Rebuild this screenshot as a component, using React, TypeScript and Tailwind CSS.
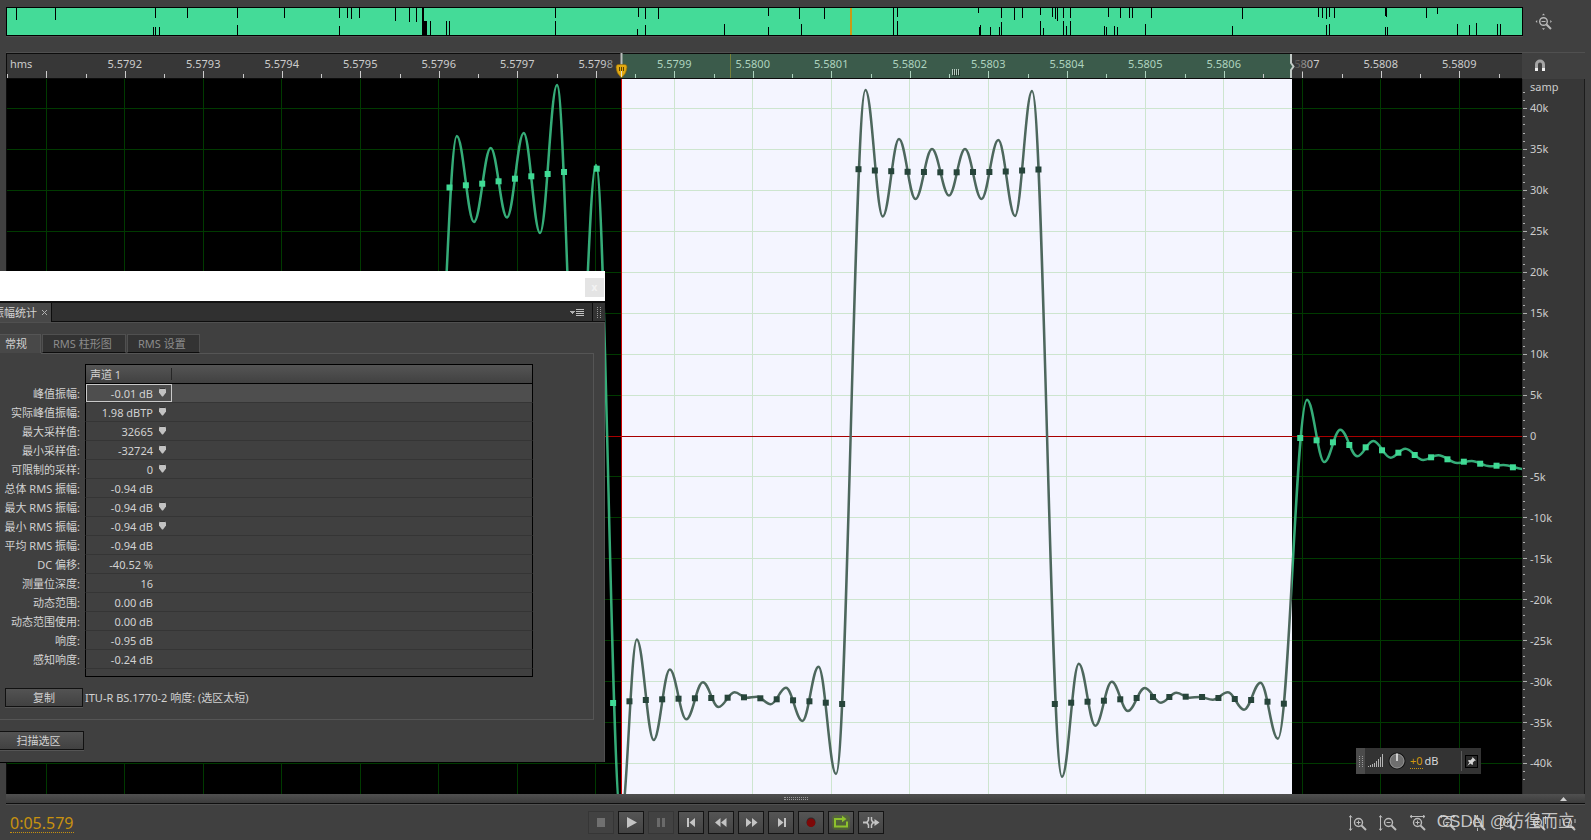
import React from "react";

// [x, length] of the silent gaps in the overview bar
const TOP_GAPS = [
    [9, 12], [48, 12], [148, 10], [180, 10], [230, 10], [277, 10], [332, 10], [340, 10], [344, 11], [352, 10], [388, 13], [402, 14], [409, 14], [415, 14], [416, 14],
    [548, 10], [631, 9], [638, 11], [651, 11], [761, 8], [792, 11], [817, 11], [886, 14], [890, 9], [971, 5], [994, 10], [1007, 12], [1015, 10], [1033, 7], [1045, 9], [1048, 11], [1050, 13],
    [1056, 10], [1063, 10], [1101, 9], [1113, 10], [1122, 10], [1125, 10], [1144, 10], [1235, 11], [1311, 9], [1315, 10], [1319, 11], [1322, 9], [1327, 10], [1378, 8], [1379, 9], [1419, 10], [1430, 6],
];
const BOTTOM_GAPS = [
    [146, 8], [148, 8], [152, 8], [230, 10], [332, 9], [415, 14], [416, 14], [417, 14], [418, 14], [419, 14], [423, 14], [439, 14], [442, 14],
    [548, 14], [630, 6], [638, 10], [717, 11], [761, 8], [794, 11], [886, 13], [890, 14], [972, 8], [973, 10], [983, 8], [992, 8], [994, 13], [1033, 14], [1036, 7],
    [1056, 14], [1059, 9], [1063, 14], [1097, 9], [1099, 8], [1107, 9], [1110, 8], [1138, 11], [1225, 9], [1319, 10], [1322, 11], [1378, 8], [1380, 8], [1450, 11], [1462, 10], [1469, 12], [1490, 11], [1493, 11],
];

// Turning points of the interpolated wave
const TURNS = [
    [436, 420], [456.8, 136], [474, 222], [490.7, 148], [507, 217.5], [523.7, 133], [540, 233], [557, 85], [577, 440], [596, 165], [621, 818],
    [636.8, 639.5], [653.7, 740], [669.8, 669.5], [686.3, 719.3], [702.9, 682.3], [718.5, 707], [734.6, 692.3], [746.5, 697.7], [757, 696.7],
    [770.7, 704.3], [785.9, 687.7], [802.4, 721], [818.5, 666.7], [836, 774], [865.5, 90], [882.8, 216.5], [899, 139], [915.5, 199],
    [932, 149], [949, 195.5], [965, 149], [981.5, 199], [998.3, 140], [1015, 216], [1032, 91], [1062, 776.7], [1078.8, 663.7],
    [1095.3, 725.7], [1111.8, 681.7], [1127.9, 711], [1144.8, 688], [1160.9, 702.7], [1176.5, 692.7], [1189.5, 697.7], [1200, 697],
    [1212.7, 699.7], [1227.9, 692.3], [1244, 709.7], [1260.5, 682.7], [1277.9, 738.7], [1307, 399.7], [1324.3, 462], [1340.3, 429.7],
    [1357.3, 456.3], [1373.3, 441], [1390.7, 457.7], [1405.3, 448.7], [1423.3, 460], [1438.3, 455.3], [1457.3, 463], [1471.7, 461],
    [1490, 466.3], [1503.3, 465], [1524, 469],
];

// One sample every 16.36 units, null where the panel hides it
const SAMPLES = [
    187.5, 185.3, 183.7, 181.3, 178.7, 176.3, 174, 172, null, 168.7, 703,
    701.3, 700, 699.3, 698.7, 698.3, 698, 697.7, 697.3, 698.3, 699.3, 700.3, 701.3, 702.7, 704,
    169.2, 170.5, 171.2, 171.8, 172, 172.3, 172.3, 172, 172, 171.5, 170.5, 169.5,
    704, 702.7, 701.7, 700.7, 699.3, 698, 697, 697, 696.7, 697, 698, 699, 700, 701.7, 703.7,
    438, 440.3, 442.3, 445, 447.3, 450.3, 452.7, 455, 457.3, 459.3, 461.7, 463.7, 465.7, 467.3,
];

const TIMES = ["", "5.5792", "5.5793", "5.5794", "5.5795", "5.5796", "5.5797", "5.5798", "5.5799", "5.5800", "5.5801", "5.5802", "5.5803", "5.5804", "5.5805", "5.5806", "5.5807", "5.5808", "5.5809"];
const LEVELS = ["40k", "35k", "30k", "25k", "20k", "15k", "10k", "5k", "0", "-5k", "-10k", "-15k", "-20k", "-25k", "-30k", "-35k", "-40k"];

const STATS: { label: string; value: string; pin?: boolean }[] = [
    { label: "峰值振幅:", value: "-0.01 dB", pin: true },
    { label: "实际峰值振幅:", value: "1.98 dBTP", pin: true },
    { label: "最大采样值:", value: "32665", pin: true },
    { label: "最小采样值:", value: "-32724", pin: true },
    { label: "可限制的采样:", value: "0", pin: true },
    { label: "总体 RMS 振幅:", value: "-0.94 dB" },
    { label: "最大 RMS 振幅:", value: "-0.94 dB", pin: true },
    { label: "最小 RMS 振幅:", value: "-0.94 dB", pin: true },
    { label: "平均 RMS 振幅:", value: "-0.94 dB" },
    { label: "DC 偏移:", value: "-40.52 %" },
    { label: "测量位深度:", value: "16" },
    { label: "动态范围:", value: "0.00 dB" },
    { label: "动态范围使用:", value: "0.00 dB" },
    { label: "响度:", value: "-0.95 dB" },
    { label: "感知响度:", value: "-0.24 dB" },
];

function smoothPath(points: number[][]) {
    let d = `M${points[0][0]} ${points[0][1]}`;
    for (let i = 1; i < points.length; i++) {
        const [x0, y0] = points[i - 1];
        const [x1, y1] = points[i];
        const k = (x1 - x0) * 0.37;
        d += `C${x0 + k} ${y0} ${x1 - k} ${y1} ${x1} ${y1}`;
    }
    return d;
}

const WAVE = smoothPath(TURNS);

function Overview() {
    return (
        <div className="flex pl-[6px] pt-[7px]">
            <div className="h-[29px] flex-1 border border-black bg-[#44db98] shadow-[0_1px_0_#505050]">
                <svg className="block h-full w-full" viewBox="0 0 1515 27" preserveAspectRatio="none" shapeRendering="crispEdges">
                    {TOP_GAPS.map(([x, len]) => <rect key={x} x={x} y={0} width={1} height={len} fill="#000" />)}
                    {BOTTOM_GAPS.map(([x, len]) => <rect key={x} x={x} y={27 - len} width={1} height={len} fill="#000" />)}
                    <rect x={843} y={0} width={2} height={27} fill="#c99a16" />
                </svg>
            </div>
            <div className="flex w-[68px] items-center pl-[12px]">
                <button aria-label="Zoom out full">
                    <svg width="18" height="18" viewBox="0 0 18 18" fill="none" stroke="#b8b8b8">
                        <circle cx="8.5" cy="8.5" r="3.8" strokeWidth="1.4" />
                        <path d="M11.5 11.5L16 16" strokeWidth="2" />
                        <path d="M6.5 8.5h4" />
                        <path d="M7 2.2L8.5.6 10 2.2zM7 15.3l1.5 1.6 1.5-1.6zM2.2 7L.6 8.5 2.2 10zM15.3 7l1.6 1.5-1.6 1.5z" fill="#b8b8b8" stroke="none" />
                    </svg>
                </button>
            </div>
        </div>
    );
}

function TimeRuler() {
    return (
        <div className="flex">
            <div className="relative h-[26px] flex-1 border-y border-l border-[#0c0c0c] bg-[#373737]">
                <div className="absolute inset-y-0 left-[40.6%] w-[44.2%] bg-[#3b5b4b]" />
                <div className="absolute inset-y-0 left-[47.7%] w-px bg-[#77803a]" />
                <div className="relative flex h-full overflow-hidden">
                    {TIMES.map((time, i) => {
                        const inside = i > 7 && i < 16;
                        return (
                            <div key={i} className={`relative shrink-0 pt-[2px] text-center ${inside ? "text-[#aed3bf]" : "text-[#cccccc]"}`} style={{ width: `${(78.5 / 1515) * 100}%` }}>
                                {i === 0 ? <div className="pl-[3px] text-left">hms</div> : time}
                                <div className="absolute bottom-0 left-0 h-[4px] w-px bg-current" />
                                <div className="absolute bottom-0 left-1/2 h-[7px] w-px bg-current" />
                            </div>
                        );
                    })}
                    <div className="relative flex-1"><div className="absolute bottom-0 left-0 h-[4px] w-px bg-[#c4c4c4]" /></div>
                </div>
                {/* labels fade out towards the selection edges */}
                <div className="absolute left-[39.4%] top-0 h-[18px] w-[1.2%] bg-linear-to-l from-[#373737] to-transparent" />
                <div className="absolute left-[84.2%] top-0 h-[18px] w-[0.6%] bg-[#3b5b4b]" />
                <div className="absolute left-[84.8%] top-0 h-[18px] w-[1.4%] bg-linear-to-r from-[#373737] to-transparent" />
                <svg className="absolute -bottom-px left-[40.6%] -ml-[7px]" width="13" height="26" viewBox="0 0 13 26">
                    <path d="M6.5 0v12" stroke="#b9bdbb" strokeWidth="2" />
                    <path d="M3 11.500h7q2 0 2 2.500Q12 20 6.500 25 1 20 1 14q0-2.500 2-2.500z" fill="#e2a911" stroke="#8a6408" strokeWidth=".6" />
                    <path d="M4.500 14v4M6.500 14v4M8.500 14v4" stroke="#5c4204" />
                    <path d="M6.500 18v6" stroke="#e9e2c8" />
                </svg>
                <svg className="absolute bottom-0 left-[84.7%]" width="6" height="24" viewBox="0 0 6 24">
                    <path d="M1 0v9l2.500 3.500L1 16v8" fill="none" stroke="#c2cac6" strokeWidth="2" />
                </svg>
                <svg className="absolute bottom-[2px] left-[62.4%]" width="9" height="7" viewBox="0 0 9 7" shapeRendering="crispEdges">
                    <path d="M.5 0v6M2.500 0v6M4.500 0v6M6.500 0v6" stroke="#b5c9be" />
                    <path d="M1.500 1v6M3.500 1v6M5.500 1v6M7.500 1v6" stroke="#22352b" />
                </svg>
            </div>
            <div className="flex w-[63px] items-center pb-[2px] pl-[12px]">
                <button aria-label="Snap">
                    <svg width="12" height="14" viewBox="0 0 12 14" fill="none">
                        <path d="M2.500 12V6.500a3.500 3.500 0 0 1 7 0V12" stroke="#a4a4a4" strokeWidth="3" />
                        <path d="M1 11.500h3M8 11.500h3" stroke="#f2f2f2" strokeWidth="3" />
                    </svg>
                </button>
            </div>
        </div>
    );
}

function Waveform() {
    return (
        <svg className="block h-full w-full" viewBox="7 79 1515 715" preserveAspectRatio="none">
            <defs>
                <clipPath id="inside"><rect x="621.500" y="79" width="670.500" height="715" /></clipPath>
                <clipPath id="outside"><path d="M7 79H621V794H7zM1292 79H1522V794H1292z" /></clipPath>
            </defs>
            <rect x="7" y="79" width="1515" height="715" fill="#000" />
            <rect x="621" y="79" width="671" height="715" fill="#f4f5ff" />
            {["outside", "inside"].map((part) => (
                <g key={part} clipPath={`url(#${part})`} stroke={part === "inside" ? "#cde5cf" : "#003a00"} shapeRendering="crispEdges">
                    {TIMES.map((_, i) => <path key={i} d={`M${46.4 + i * 78.5} 79V794`} />)}
                    {LEVELS.map((_, i) => <path key={i} d={`M7 ${108.5 + i * 40.94}H1522`} />)}
                </g>
            ))}
            <path d="M7 436.500H1522" stroke="#a80000" shapeRendering="crispEdges" />
            {["outside", "inside"].map((part) => (
                <g key={part} clipPath={`url(#${part})`}>
                    <path d={WAVE} fill="none" stroke={part === "inside" ? "#4d675d" : "#35ac78"} strokeWidth="2.500" />
                    {SAMPLES.map((y, i) => y !== null && (
                        <rect key={i} x={446.500 + i * 16.36} y={y - 3} width="6" height="6" fill={part === "inside" ? "#26443a" : "#40da95"} />
                    ))}
                </g>
            ))}
            <path d="M621.500 79V794" stroke="#cf0000" shapeRendering="crispEdges" />
        </svg>
    );
}

function LevelRuler() {
    return (
        <div className="relative flex w-[63px] flex-col border-l border-r border-[#1c1c1c] border-l-[#2c2c2c] bg-[#373737] text-[#cccccc]">
            <div className="absolute left-[7px] top-0 leading-4">samp</div>
            <div className="h-[9px]" />
            {LEVELS.map((level) => (
                <div key={level} className="flex min-h-0 flex-[41] items-center gap-[3px]">
                    <svg className="h-full w-[4px]" viewBox="0 0 4 41" preserveAspectRatio="none" shapeRendering="crispEdges" stroke="#b4b4b4">
                        <path d="M0 4.500h2M0 12.500h2M0 20.500h4M0 28.500h2M0 36.500h2" />
                    </svg>
                    <span>{level}</span>
                </div>
            ))}
            <div className="h-[10px]" />
        </div>
    );
}

function GainHud() {
    return (
        <div className="absolute bottom-[20px] right-[41px] flex h-[26px] w-[125px] items-center bg-[#333333]">
            <div className="flex h-full w-[9px] items-center justify-center bg-[#4b4b4b]">
                <div className="h-[11px] w-[4px] border-x border-dotted border-[#999]" />
            </div>
            <svg className="ml-[3px]" width="16" height="14" viewBox="0 0 16 14" stroke="#b4b4b4" shapeRendering="crispEdges">
                <path d="M.5 13v-1M2.500 13v-2M4.500 13v-3M6.500 13V9M8.500 13V7M10.500 13V5M12.500 13V3M14.500 13V0" />
            </svg>
            <svg className="ml-[4px]" width="18" height="18" viewBox="0 0 18 18">
                <circle cx="9" cy="9" r="8.500" fill="#161616" />
                <circle cx="9" cy="9" r="7" fill="#6f6f6f" stroke="#9a9a9a" />
                <path d="M9 1.500V9" stroke="#f0f0f0" strokeWidth="1.500" />
            </svg>
            <span className="ml-[4px] border-b border-dotted border-[#c8920f] leading-[14px] text-[#d0980f]">+0</span>
            <span className="ml-[2px] leading-[14px] text-[#d8d8d8]">dB</span>
            <div className="ml-auto h-[20px] w-px bg-[#5c5c5c]" />
            <button aria-label="Pin" className="mx-[3px] flex h-[13px] w-[13px] items-center justify-center border border-black bg-[#2a2a2a]">
                <svg width="9" height="9" viewBox="0 0 9 9" fill="#d6d6d6">
                    <path d="M5.500 0L9 3.500l-1.500.3L5.800 5.500l.2 1.800-.9.7L1 3.900l.7-.9 1.800.2L5.200 1.500z" />
                    <path d="M2.800 5l1.200 1.200L.3 8.700z" />
                </svg>
            </button>
        </div>
    );
}

function StatsTable() {
    return (
        <table className="w-[533px] table-fixed border-separate border-spacing-0 leading-[17px]">
            <colgroup>
                <col className="w-[85px]" />
                <col className="w-[87px]" />
                <col />
            </colgroup>
            <thead>
                <tr className="h-[20px]">
                    <td />
                    <th className="border border-r-0 border-black bg-linear-to-b from-[#555555] to-[#414141] p-0 pl-[4px] text-left font-normal">
                        <div className="flex items-center justify-between">
                            声道 1
                            <div className="h-[12px] w-px bg-[#262626]" />
                        </div>
                    </th>
                    <td className="border border-l-0 border-black bg-linear-to-b from-[#555555] to-[#414141]" />
                </tr>
            </thead>
            <tbody>
                {STATS.map((stat, i) => (
                    <tr key={stat.label} className="h-[19px]">
                        <th className="p-0 pr-[5px] text-right font-normal whitespace-nowrap">{stat.label}</th>
                        <td className={`border-b border-l border-b-[#353535] border-l-black p-0 ${i === 0 ? "bg-[#4e4e4e]" : ""}`}>
                            <div className={`flex h-[18px] items-center justify-end gap-[5px] pr-[5px] ${i === 0 ? "outline outline-1 -outline-offset-1 outline-[#c9c9c9]" : ""}`}>
                                <span>{stat.value}</span>
                                {stat.pin ? (
                                    <button aria-label={`转到 ${stat.label}`} className="pb-[2px]">
                                        <svg className="block" width="9" height="9" viewBox="0 0 9 9">
                                            <path d="M2 .5h5l1 1v3L5 8.500H4L1 4.500v-3z" fill="#c2c2c2" />
                                            <path d="M2 .3h5" stroke="#222" />
                                        </svg>
                                    </button>
                                ) : <span className="w-[9px]" />}
                            </div>
                        </td>
                        <td className={`border-b border-r border-b-[#353535] border-r-black ${i === 0 ? "bg-[#4e4e4e]" : ""}`} />
                    </tr>
                ))}
                <tr className="h-[8px]">
                    <td className="p-0" />
                    <td className="border-b border-l border-black p-0" />
                    <td className="border-b border-r border-black p-0" />
                </tr>
            </tbody>
        </table>
    );
}

const PANEL_BUTTON = "block h-[19px] border border-[#111] bg-linear-to-b from-[#535353] to-[#414141] leading-[16px] shadow-[0_1px_0_#555]";

function StatsPanel() {
    return (
        <section className="absolute left-0 top-[271px] w-[605px] overflow-hidden border-b border-black bg-[#404040] text-[#d2d2d2]">
            <div className="flex h-[30px] items-center justify-end bg-white pr-px pt-[2px]">
                <button aria-label="Close" className="h-[19px] w-[19px] bg-[#e4e4e4] text-[10px] font-bold leading-[18px] text-[#f3f3f3]">x</button>
            </div>
            <div className="flex h-[21px] border-t-2 border-[#111]">
                <div className="flex w-[51px] items-center justify-end gap-[5px] bg-[#484848] pr-[4px] whitespace-nowrap">
                    <span>振幅统计</span>
                    <button aria-label="关闭">
                        <svg width="5" height="5" viewBox="0 0 5 5" stroke="#b0b0b0" className="block"><path d="M0 0l5 5M5 0L0 5" /></svg>
                    </button>
                </div>
                <div className="flex flex-1 items-center justify-end border-b border-l border-[#0d0d0d] bg-[#303030] pr-[7px]">
                    <button aria-label="Menu">
                        <svg width="15" height="9" viewBox="0 0 15 9" className="block" shapeRendering="crispEdges">
                            <path d="M0 3h5L2.500 6z" fill="#b0b0b0" />
                            <path d="M6 1.500h8M6 3.500h8M6 5.500h8M6 7.500h8" stroke="#c0c0c0" />
                        </svg>
                    </button>
                </div>
                <div className="flex w-[13px] items-center justify-center border-b border-l border-[#0d0d0d] bg-[#333]">
                    <div className="h-[11px] w-[4px] border-x border-dotted border-[#999]" />
                </div>
            </div>
            <div className="border-r border-t border-[#505050] pb-[12px] pt-[11px]">
                <div className="flex h-[19px] leading-[18px]" role="tablist">
                    <button role="tab" className="w-[41px] border-r border-t border-[#555] bg-[#484848] pl-[5px] text-left">常规</button>
                    <button role="tab" className="ml-px w-[84px] border border-b-[#0d0d0d] border-[#505050] bg-[#333] pl-[10px] text-left text-[#8c8c8c]">RMS 柱形图</button>
                    <button role="tab" className="ml-px w-[73px] border border-b-[#0d0d0d] border-[#505050] bg-[#333] pl-[10px] text-left text-[#8c8c8c]">RMS 设置</button>
                </div>
                <div className="mr-[10px] border-b border-r border-[#555] pb-[12px]">
                    <div className="ml-[41px] h-px bg-[#555]" />
                    <div className="pt-[10px]"><StatsTable /></div>
                    <div className="flex items-center gap-[2px] pl-[5px] pt-[11px]">
                        <button className={`${PANEL_BUTTON} w-[78px]`}>复制</button>
                        <span>ITU-R BS.1770-2 响度: (选区太短)</span>
                    </div>
                </div>
                <button className={`${PANEL_BUTTON} mt-[11px] w-[84px] border-l-0 pr-[6px]`}>扫描选区</button>
            </div>
        </section>
    );
}

function Icon({ children }: { children: React.ReactNode }) {
    return <svg width="24" height="21" viewBox="0 0 24 21" className="block">{children}</svg>;
}

const TRANSPORT: { name: string; off?: boolean; icon: React.ReactNode }[] = [
    { name: "Stop", off: true, icon: <path d="M8 6h8v9H8z" fill="#707070" /> },
    { name: "Play", icon: <path d="M8 5l10 5.500L8 16z" fill="#c4c4c4" /> },
    { name: "Pause", off: true, icon: <path d="M8 6h3v9H8zM13 6h3v9h-3z" fill="#6a6a6a" /> },
    { name: "Previous", icon: <path d="M8 6h2v9H8zM16 6v9l-5.500-4.500z" fill="#c4c4c4" /> },
    { name: "Rewind", icon: <path d="M11.500 6v9L6 10.500zM17.500 6v9L12 10.500z" fill="#c4c4c4" /> },
    { name: "Forward", icon: <path d="M7 6v9l5.500-4.500zM13 6v9l5.500-4.500z" fill="#c4c4c4" /> },
    { name: "Next", icon: <path d="M9 6v9l5.500-4.500zM15 6h2v9h-2z" fill="#c4c4c4" /> },
    { name: "Record", icon: <><circle cx="12" cy="10" r="4.500" fill="#2a2a2a" /><circle cx="12" cy="10.700" r="4.300" fill="#7e0808" /></> },
    {
        name: "Loop",
        icon: <>
            <rect x="3" y="3" width="18" height="15" rx="4" fill="#5c8a1a" opacity=".35" />
            <path d="M9 7H6v7.500h12V9.500" fill="none" stroke="#8dc22c" strokeWidth="2" />
            <path d="M8 6h5V3.800L17.500 7 13 10.200V8H8z" fill="#8dc22c" />
        </>,
    },
    {
        name: "Skip selection",
        icon: <>
            <path d="M9.500 5v3L8 10.500 9.500 13v3M12.500 5v3l1.500 2.500-1.500 2.500v3" fill="none" stroke="#c4c4c4" strokeWidth="1.500" />
            <path d="M4 9.500h4v2H4zM14 9.500h1.500V7l5 3.500-5 3.500v-2.500H14z" fill="#c4c4c4" />
        </>,
    },
];

function Lens({ sign, extra, shift = 0 }: { sign: string; extra?: string; shift?: number }) {
    return (
        <svg width="18" height="16" viewBox="0 0 18 16" fill="none" stroke="#bcbcbc" className="block">
            <g transform={`translate(${shift} 0)`}>
                <circle cx="8.500" cy="7.500" r="4" strokeWidth="1.400" />
                <path d="M11.500 10.500L16 15" strokeWidth="2" />
                <path d={sign} />
            </g>
            {extra && <path d={extra} />}
        </svg>
    );
}

const PLUS = "M6.500 7.500h4M8.500 5.500v4";
const MINUS = "M6.500 7.500h4";
const TALL = "M1.500 1v14M0 2.500L1.500.5 3 2.500M0 13.500l1.500 2 1.500-2";
const WIDE = "M1 1.500h15M3 0L1 1.500 3 3M14 0l2 1.500L14 3";

const ZOOMS = [
    { name: "Zoom in amplitude", sign: PLUS, extra: TALL, shift: 1 },
    { name: "Zoom out amplitude", sign: MINUS, extra: TALL, shift: 1 },
    { name: "Zoom in time", sign: PLUS, extra: WIDE },
    { name: "Zoom out time", sign: MINUS, extra: WIDE },
    { name: "Zoom out full", sign: MINUS, extra: "M8.500 0v2M8.500 13v3M1 7.500h2" },
    { name: "Zoom in at in point", sign: PLUS, extra: "M1.500 1v14M1.500 4h3" },
    { name: "Zoom in at out point", sign: PLUS, extra: "M16.500 1v8" },
    { name: "Zoom to selection", sign: MINUS, extra: "M1 4v7M16 4v4" },
];

export default function App() {
    return (
        <div className="relative flex h-screen min-h-[800px] flex-col overflow-hidden bg-[#404040] font-['Noto_Sans','Noto_Sans_CJK_SC',sans-serif] text-[11px] leading-4">
            <Overview />
            <main className="mt-4 flex min-h-0 flex-1 flex-col px-[6px]">
                <div className="h-px bg-[#505050]" />
                <TimeRuler />
                <div className="flex min-h-0 flex-1">
                    <div className="relative min-w-0 flex-1 border-l border-[#0c0c0c]">
                        <Waveform />
                        <GainHud />
                    </div>
                    <LevelRuler />
                </div>
                <div className="flex h-[10px] border-b border-[#0e0e0e] bg-linear-to-b from-[#505050] to-[#3c3c3c] shadow-[0_1px_0_#505050]">
                    <div className="flex flex-1 items-center justify-center pl-[25px]">
                        <div className="h-[3px] w-[24px] border-y border-dotted border-[#999]" />
                    </div>
                    <svg className="mr-[18px] mt-[3px]" width="7" height="4" viewBox="0 0 7 4"><path d="M0 4l3.500-4L7 4z" fill="#d0d0d0" /></svg>
                </div>
            </main>
            <footer className="flex h-[36px] items-center">
                <div className="w-[36.95%] pl-[10px] pt-[2px]">
                    <span className="inline-block border-b border-dotted border-[#c8920f] text-[16px] leading-[18px] text-[#c8920f]">0:05.579</span>
                </div>
                <div className="flex gap-1">
                    {TRANSPORT.map((item) => (
                        <button key={item.name} aria-label={item.name} disabled={item.off} className={`h-[23px] w-[26px] border ${item.off ? "border-[#363636] bg-[#424242]" : "border-[#141414] bg-linear-to-b from-[#555] to-[#434343]"}`}>
                            <Icon>{item.icon}</Icon>
                        </button>
                    ))}
                </div>
                <div className="relative ml-auto flex gap-3 pr-[14px] pt-px">
                    {ZOOMS.map((zoom) => (
                        <button key={zoom.name} aria-label={zoom.name}><Lens sign={zoom.sign} extra={zoom.extra} shift={zoom.shift} /></button>
                    ))}
                    <div className="absolute -top-1 right-[16px] font-['Liberation_Sans','Noto_Sans_CJK_SC',sans-serif] text-[17px] leading-6 whitespace-nowrap text-[#dedede]/85">CSDN @彷徨而立</div>
                </div>
            </footer>
            <StatsPanel />
        </div>
    );
}
